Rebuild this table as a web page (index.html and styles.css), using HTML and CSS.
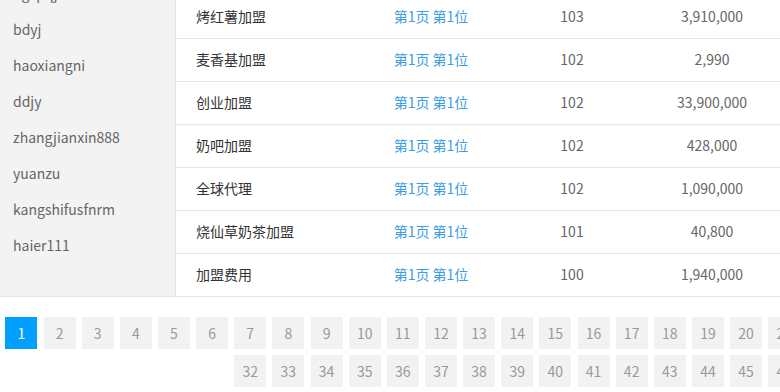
FILE: index.html
```html
<!DOCTYPE html>
<html lang="zh-CN">
<head>
<meta charset="utf-8">
<title>排名</title>
<link rel="stylesheet" href="styles.css">
</head>
<body>
<div class="page">
  <div class="main">
    <aside class="side">
      <a class="side-item">ngcpqj</a>
      <a class="side-item">bdyj</a>
      <a class="side-item">haoxiangni</a>
      <a class="side-item">ddjy</a>
      <a class="side-item">zhangjianxin888</a>
      <a class="side-item">yuanzu</a>
      <a class="side-item">kangshifusfnrm</a>
      <a class="side-item">haier111</a>
    </aside>
    <section class="table">
      <div class="row head"><span class="c1">关键词</span><span class="c2">排名</span><span class="c3">指数</span><span class="c4">结果数</span></div>
      <div class="row"><span class="c1">烤红薯加盟</span><span class="c2 link">第1页 第1位</span><span class="c3">103</span><span class="c4">3,910,000</span></div>
      <div class="row"><span class="c1">麦香基加盟</span><span class="c2 link">第1页 第1位</span><span class="c3">102</span><span class="c4">2,990</span></div>
      <div class="row"><span class="c1">创业加盟</span><span class="c2 link">第1页 第1位</span><span class="c3">102</span><span class="c4">33,900,000</span></div>
      <div class="row"><span class="c1">奶吧加盟</span><span class="c2 link">第1页 第1位</span><span class="c3">102</span><span class="c4">428,000</span></div>
      <div class="row"><span class="c1">全球代理</span><span class="c2 link">第1页 第1位</span><span class="c3">102</span><span class="c4">1,090,000</span></div>
      <div class="row"><span class="c1">烧仙草奶茶加盟</span><span class="c2 link">第1页 第1位</span><span class="c3">101</span><span class="c4">40,800</span></div>
      <div class="row"><span class="c1">加盟费用</span><span class="c2 link">第1页 第1位</span><span class="c3">100</span><span class="c4">1,940,000</span></div>
    </section>
  </div>
  <nav class="pager">
    <a class="pg on">1</a><a class="pg">2</a><a class="pg">3</a><a class="pg">4</a><a class="pg">5</a><a class="pg">6</a><a class="pg">7</a><a class="pg">8</a><a class="pg">9</a><a class="pg">10</a>
    <a class="pg">11</a><a class="pg">12</a><a class="pg">13</a><a class="pg">14</a><a class="pg">15</a><a class="pg">16</a><a class="pg">17</a><a class="pg">18</a><a class="pg">19</a><a class="pg">20</a>
    <a class="pg">21</a><a class="pg">22</a><a class="pg">23</a><a class="pg">24</a><a class="pg">25</a><a class="pg">26</a><a class="pg">27</a><a class="pg">28</a><a class="pg">29</a><a class="pg">30</a>
    <a class="pg">31</a><a class="pg">32</a><a class="pg">33</a><a class="pg">34</a><a class="pg">35</a><a class="pg">36</a><a class="pg">37</a><a class="pg">38</a><a class="pg">39</a><a class="pg">40</a>
    <a class="pg">41</a><a class="pg">42</a><a class="pg">43</a><a class="pg">44</a><a class="pg">45</a><a class="pg">46</a><a class="pg">47</a><a class="pg">48</a><a class="pg">49</a><a class="pg">50</a>
  </nav>
</div>
</body>
</html>
```
FILE: styles.css
```css
html, body {
  margin: 0;
  padding: 0;
  overflow: hidden;
  background: #fff;
}
body {
  font-family: "Microsoft YaHei", "Noto Sans CJK SC", sans-serif;
  font-size: 14px;
  color: #333;
}
.page {
  width: 1200px;
  margin-top: -47px;
}
.main {
  display: flex;
  border-bottom: 1px solid #e6e6e6;
}
.side {
  width: 175px;
  flex: none;
  background: #f3f3f3;
  border-right: 1px solid #e6e6e6;
  padding-top: 22px;
  display: flex;
  flex-direction: column;
}
.side-item {
  display: block;
  height: 36px;
  line-height: 36px;
  padding-left: 13px;
  color: #666;
  font-size: 14px;
}
.table {
  flex: 1;
}
.row {
  display: flex;
  height: 41px;
  line-height: 41px;
  padding-bottom: 1px;
  border-bottom: 1px solid #e6e6e6;
}
.row:last-child {
  border-bottom: none;
}
.c1 {
  width: 164px;
  padding-left: 20px;
}
.c2, .c3, .c4 {
  width: 140px;
  text-align: center;
  color: #666;
}
.c2 {
  width: 142px;
}
.c2.link {
  color: #3b9de6;
}
.pager {
  width: 1177px;
  margin: 20px 0 0 5px;
  display: flex;
  flex-wrap: wrap;
  justify-content: center;
  gap: 6px 6.15px;
}
.pg {
  width: 32px;
  height: 32px;
  line-height: 32px;
  text-align: center;
  background: #f2f2f2;
  color: #999;
  font-size: 14px;
}
.pg.on {
  background: #00a0ff;
  color: #fff;
}
```
